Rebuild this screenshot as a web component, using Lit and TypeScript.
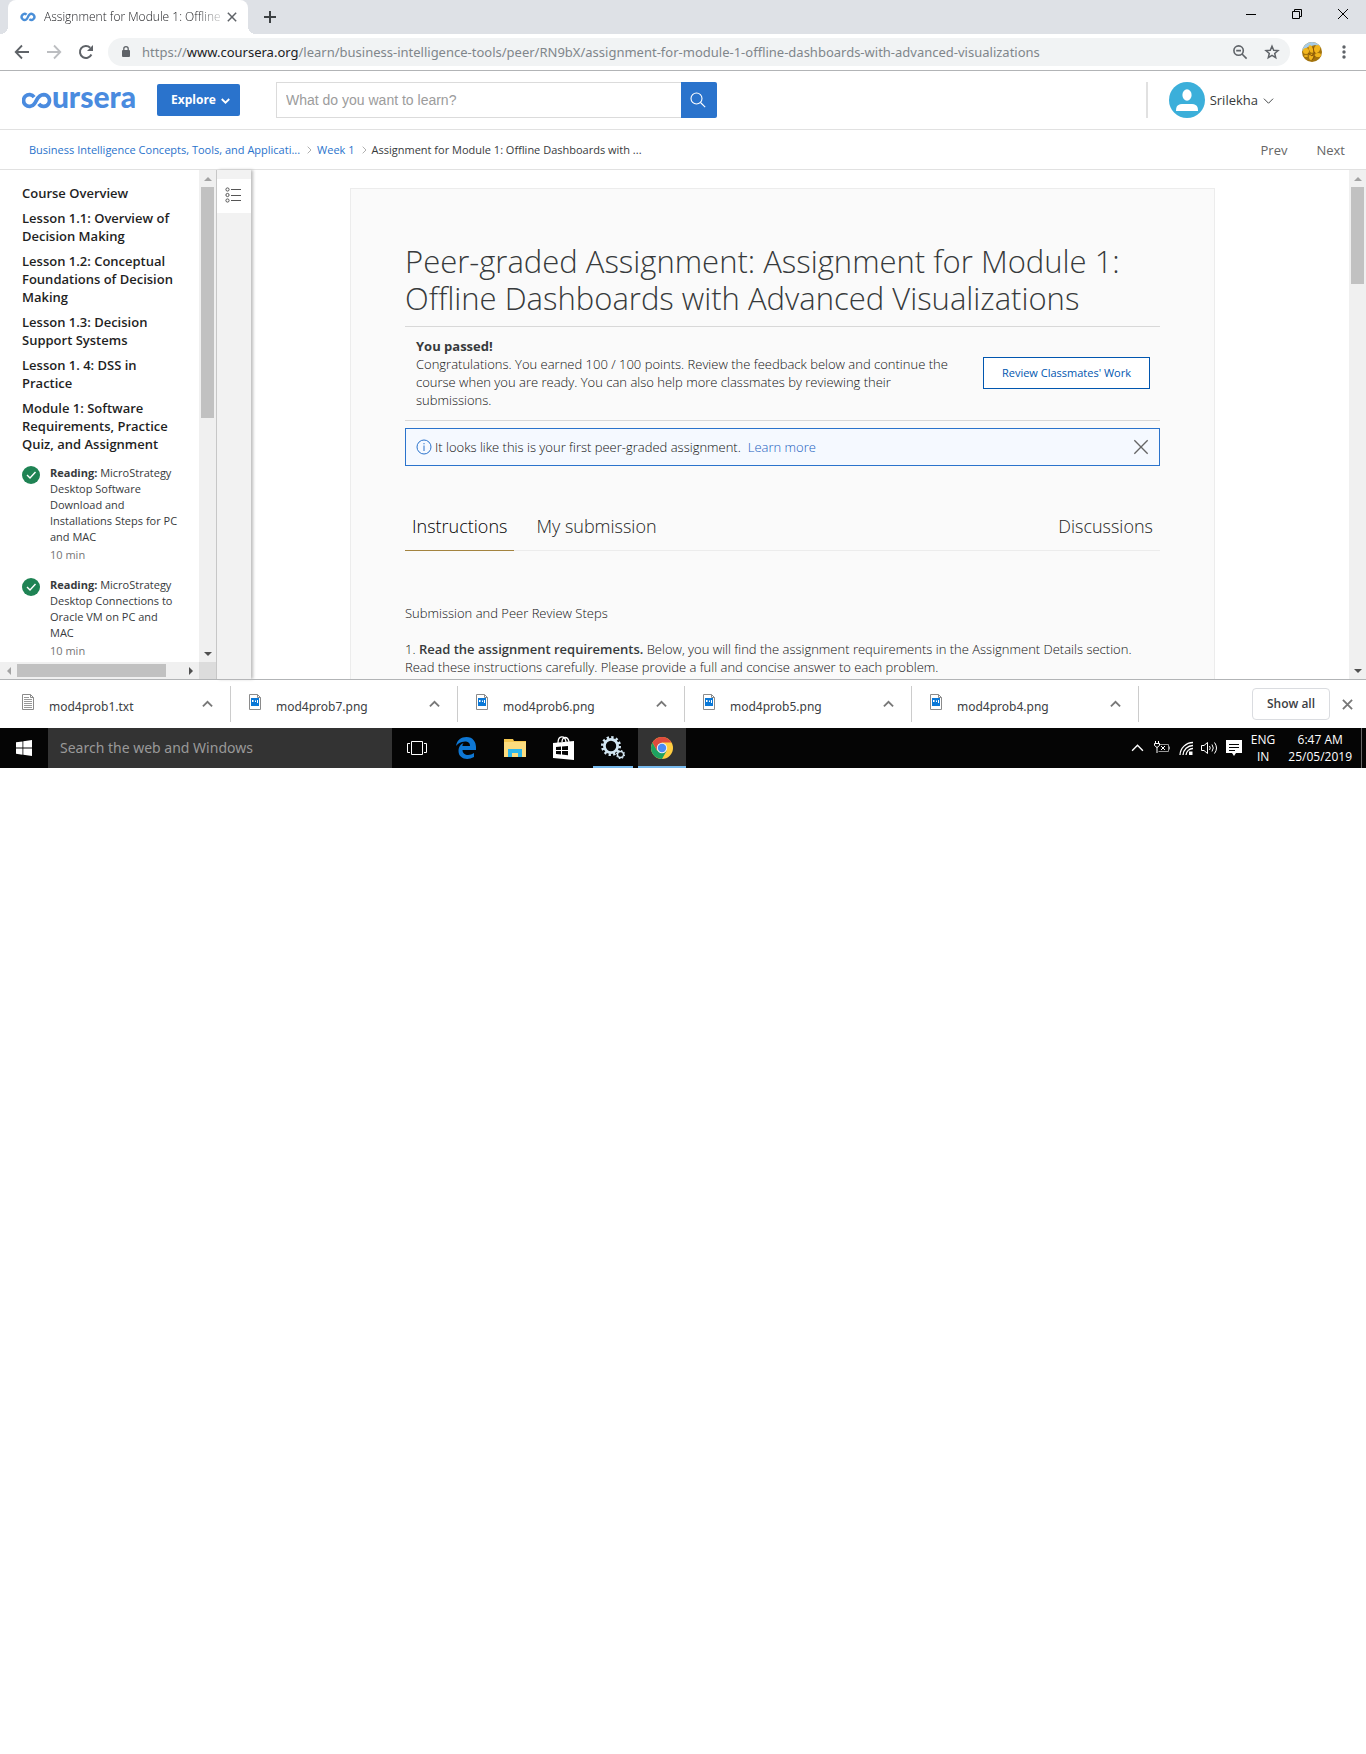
import { LitElement, html, css, svg } from "lit";
import { customElement, property } from "lit/decorators.js";

const chevron = (dir: "up" | "down" | "right", size: number, width = 1) => {
  const d = { up: "M1 8 L6 3 L11 8", down: "M1 4 L6 9 L11 4", right: "M4 1 L9 6 L4 11" }[dir];
  return html`<svg width=${size} height=${size} viewBox="0 0 12 12" fill="none" stroke="currentColor" stroke-width=${width} aria-hidden="true"><path d=${d} /></svg>`;
};

const cross = (size: number, width = 1) =>
  html`<svg width=${size} height=${size} viewBox="0 0 12 12" stroke="currentColor" stroke-width=${width} aria-hidden="true"><path d="M1 1 L11 11 M11 1 L1 11" /></svg>`;

@customElement("scroll-bar")
export class ScrollBar extends LitElement {
  @property({ type: Boolean, reflect: true }) horizontal = false;
  @property({ type: Number }) ratio = 50;

  static styles = css`
    :host { display: flex; flex-direction: column; width: 17px; background: #f0f0f0; }
    :host([horizontal]) { flex-direction: row; width: auto; height: 17px; }
    .arrow { flex: none; display: grid; place-items: center; width: 17px; height: 17px; color: #505050; }
    .start { color: #a3a3a3; }
    .track { flex: 1; min-height: 0; min-width: 0; padding: 0 2px; }
    :host([horizontal]) .track { padding: 2px 0; }
    .thumb { background: #c1c1c1; height: 100%; }
    svg { display: block; }
  `;

  render() {
    const a = this.horizontal ? "M7 1 L3 5 L7 9 Z" : "M1 7 L5 3 L9 7 Z";
    const b = this.horizontal ? "M3 1 L7 5 L3 9 Z" : "M1 3 L5 7 L9 3 Z";
    const size = `${this.horizontal ? "width" : "height"}:${this.ratio}%`;
    return html`
      <div class="arrow start"><svg width="10" height="10"><path d=${a} fill="currentColor" /></svg></div>
      <div class="track"><div class="thumb" style=${size}></div></div>
      <div class="arrow"><svg width="10" height="10"><path d=${b} fill="currentColor" /></svg></div>
    `;
  }
}

@customElement("browser-chrome")
export class BrowserChrome extends LitElement {
  static styles = css`
    :host { display: block; font: 13px/18px "Noto Sans", "Open Sans", sans-serif; color: #5f6368; }
    button { border: 0; padding: 0; background: none; color: inherit; display: grid; place-items: center; }
    svg { display: block; }
    .tabs { display: flex; height: 34px; background: #dee1e6; padding-left: 8px; }
    .tab { position: relative; display: flex; align-items: center; width: 240px; padding: 0 8px 0 12px; box-sizing: border-box;
      background: #fff; border-radius: 8px 8px 0 0; }
    .tab::before, .tab::after { content: ""; position: absolute; bottom: 0; width: 8px; height: 8px; }
    .tab::before { left: -8px; background: radial-gradient(circle at 0 0, #dee1e6 8px, #fff 8px); }
    .tab::after { right: -8px; background: radial-gradient(circle at 100% 0, #dee1e6 8px, #fff 8px); }
    .name { flex: 1; min-width: 0; margin-left: 8px; white-space: nowrap; color: #202124;
      font: 300 12px/18px "Open Sans", sans-serif;
      -webkit-mask-image: linear-gradient(90deg, #000 85%, transparent 102%); }
    .close { width: 16px; height: 16px; }
    .new { width: 44px; color: #3c4043; }
    .win { display: flex; margin-left: auto; color: #000; height: 28px; }
    .win button { width: 46px; }
    .bar { display: flex; align-items: center; height: 36px; padding: 0 4px 0 6px; border-bottom: 1px solid #b2b4b6; }
    .nav { width: 32px; height: 28px; }
    .dim { color: #bcbec1; }
    .url { flex: 1; min-width: 0; display: flex; align-items: center; height: 28px; margin: 0 8px 0 6px; padding: 0 2px 0 10px;
      border-radius: 14px; background: #f1f3f4; }
    .address { flex: 1; min-width: 0; overflow: hidden; white-space: nowrap; margin-left: 8px; color: #80868b; }
    .address b { font-weight: 400; color: #202124; }
    .avatar { width: 28px; }
    .menu { width: 36px; height: 28px; }
  `;

  render() {
    return html`
      <div class="tabs">
        <div class="tab">
          <svg width="16" height="16" viewBox="0 0 16 16" fill="none" stroke="#4a8fd8" stroke-width="2.4"><path d="M6.6 5.6 A3 3 0 1 0 6.6 10.2 C8 8.8 8 6.8 9.4 5.6 A3 3 0 1 1 9.4 10.2" /></svg>
          <span class="name">Assignment for Module 1: Offline</span>
          <button class="close" aria-label="Close tab">${cross(10, 1.8)}</button>
        </div>
        <button class="new" aria-label="New tab"><svg width="14" height="14" viewBox="0 0 14 14" stroke="currentColor" stroke-width="2"><path d="M7 1 V13 M1 7 H13" /></svg></button>
        <div class="win">
          <button aria-label="Minimize"><svg width="10" height="10" stroke="currentColor"><path d="M0 5.5 H10" /></svg></button>
          <button aria-label="Restore"><svg width="10" height="10" fill="none" stroke="currentColor"><path d="M.5 2.5 H7.5 V9.5 H.5 Z M2.5 2.5 V.5 H9.5 V7.5 H7.5" /></svg></button>
          <button aria-label="Close window">${cross(12)}</button>
        </div>
      </div>
      <div class="bar">
        <button class="nav" aria-label="Back"><svg width="16" height="16" viewBox="0 0 16 16" fill="none" stroke="currentColor" stroke-width="1.8"><path d="M15 8 H2 M8 1.5 L1.7 8 L8 14.5" /></svg></button>
        <button class="nav dim" aria-label="Forward"><svg width="16" height="16" viewBox="0 0 16 16" fill="none" stroke="currentColor" stroke-width="1.8"><path d="M1 8 H14 M8 1.5 L14.3 8 L8 14.5" /></svg></button>
        <button class="nav" aria-label="Reload"><svg width="16" height="16" viewBox="0 0 16 16" fill="none" stroke="currentColor" stroke-width="2"><path d="M13.4 10.5 A6 6 0 1 1 12.2 3.7" /><path d="M15 1 V7 H9 Z" fill="currentColor" stroke="none" /></svg></button>
        <div class="url">
          <svg width="16" height="16" viewBox="0 0 16 16"><rect x="4" y="6" width="8" height="7" rx="1" fill="#5f6368" /><path d="M5.8 6.5 V4.8 A2.2 2.2 0 0 1 10.2 4.8 V6.5" fill="none" stroke="#5f6368" stroke-width="1.3" /></svg>
          <span class="address">https://<b>www.coursera.org</b>/learn/business-intelligence-tools/peer/RN9bX/assignment-for-module-1-offline-dashboards-with-advanced-visualizations</span>
          <button class="nav" aria-label="Zoom"><svg width="16" height="16" viewBox="0 0 16 16" fill="none" stroke="currentColor" stroke-width="1.6"><circle cx="6.6" cy="6.6" r="4.7" /><path d="M10 10 L14.6 14.6 M4.2 6.6 H9" /></svg></button>
          <button class="nav" aria-label="Bookmark"><svg width="16" height="16" viewBox="0 0 16 16" fill="none" stroke="currentColor" stroke-width="1.5"><path d="M8 2.2 L9.7 6.2 L14 6.6 L10.7 9.4 L11.7 13.6 L8 11.4 L4.3 13.6 L5.3 9.4 L2 6.6 L6.3 6.2 Z" /></svg></button>
        </div>
        <button class="avatar" aria-label="Profile">
          <svg width="20" height="20" viewBox="0 0 20 20">
            <clipPath id="c"><circle cx="10" cy="10" r="10" /></clipPath>
            <g clip-path="url(#c)">
              <rect width="20" height="20" fill="#a3730c" /><path d="M0 0 H20 V6 L13 3 L6 5 L0 9 Z" fill="#a6cbe6" />
              <g fill="#f2b51b"><ellipse cx="4" cy="9" rx="3" ry="3" /><ellipse cx="9" cy="7" rx="2" ry="4" transform="rotate(-20 9 7)" /><ellipse cx="15" cy="7" rx="3" ry="4" transform="rotate(25 15 7)" /><ellipse cx="16" cy="13" rx="3" ry="2" /><ellipse cx="9" cy="15" rx="2" ry="3" /><ellipse cx="4" cy="14" rx="2" ry="1" /></g>
              <path d="M6 11 L10 14 L13 10 M11 5 L12 10 M10 18 L13 14" stroke="#8a5208" fill="none" />
            </g>
          </svg>
        </button>
        <button class="menu" aria-label="Menu"><svg width="4" height="16" fill="currentColor"><circle cx="2" cy="3" r="1.7" /><circle cx="2" cy="8" r="1.7" /><circle cx="2" cy="13" r="1.7" /></svg></button>
      </div>
    `;
  }
}

@customElement("course-header")
export class CourseHeader extends LitElement {
  static styles = css`
    :host { display: block; font: 13px/18px "Open Sans", sans-serif; color: #373a3c; }
    svg { display: block; }
    a { color: inherit; text-decoration: none; }
    button { border: 0; padding: 0; font: inherit; }
    .top { display: flex; align-items: center; height: 58px; padding: 0 92px 0 22px; border-bottom: 1px solid #e1e1e1; }
    .logo { display: flex; align-items: center; width: 114px; color: #4a8bdf; font: 900 30px/34px Lato, sans-serif; }
    .logo span { margin-top: -8px; }
    .explore { display: flex; align-items: center; justify-content: center; gap: 5px; width: 83px; height: 32px; margin-left: 21px; padding-left: 4px;
      border-radius: 2px; background: #2a73cc; color: #fff; font-size: 12px; font-weight: 700; }
    .search { display: flex; width: 441px; margin-left: 36px; }
    .search input { flex: 1; min-width: 0; height: 36px; box-sizing: border-box; padding: 0 9px; border: 1px solid #dbdbdb; border-right: 0;
      font: 14px/18px "Liberation Sans", Arial, sans-serif; color: #373a3c; outline: 0; }
    .search input::placeholder { color: #9c9c9c; opacity: 1; }
    .go { display: grid; place-items: center; width: 36px; padding-right: 3px; background: #2a73cc; color: #fff; border-radius: 0 2px 2px 0; }
    .user { display: flex; align-items: center; gap: 5px; margin-left: auto; padding-left: 21px; height: 36px;
      border-left: 2px solid #e1e1e1; background: none; color: #373a3c; }
    .crumbs { display: flex; align-items: center; height: 39px; padding: 0 21px 0 29px; border-bottom: 1px solid #e1e1e1; font-size: 11px; }
    .crumbs svg { margin: 0 4px 0 5px; color: #888; }
    .crumbs .link { color: #2a73cc; }
    .steps { display: flex; gap: 29px; margin-left: auto; font-size: 13px; color: #666; }
  `;

  render() {
    return html`
      <div class="top">
        <a class="logo" href="#" aria-label="Coursera home">
          <svg width="32" height="17" viewBox="0 0 32 17" fill="none" stroke="currentColor" stroke-width="4"><path d="M13 4.8 A6.3 6.3 0 1 0 13 12.3 C16 9 16.5 2.2 23.3 2.2 A6.3 6.3 0 1 1 18 12.2" /></svg>
          <span>ursera</span>
        </a>
        <button class="explore">Explore ${chevron("down", 9, 2.4)}</button>
        <form class="search">
          <input type="search" aria-label="Search catalog" placeholder="What do you want to learn?" />
          <button class="go" type="button" aria-label="Search"><svg width="16" height="16" viewBox="0 0 16 16" fill="none" stroke="currentColor" stroke-width="1.1"><circle cx="6.5" cy="6.5" r="5.5" /><path d="M10.5 10.5 L15.2 15.2" /></svg></button>
        </form>
        <button class="user">
          <svg width="36" height="36" viewBox="0 0 36 36"><circle cx="18" cy="18" r="18" fill="#3bafda" /><ellipse cx="18" cy="13" rx="4.6" ry="5.8" fill="#fff" /><path d="M7 29 C7 22 10 22 18 22 C26 22 29 22 29 29 Z" fill="#fff" /></svg>
          Srilekha ${chevron("down", 11)}
        </button>
      </div>
      <nav class="crumbs">
        <a class="link" href="#">Business Intelligence Concepts, Tools, and Applicati...</a>
        ${chevron("right", 8)}<a class="link" href="#">Week 1</a>${chevron("right", 8)}
        <span>Assignment for Module 1: Offline Dashboards with ...</span>
        <span class="steps"><a href="#">Prev</a><a href="#">Next</a></span>
      </nav>
    `;
  }
}

@customElement("course-outline")
export class CourseOutline extends LitElement {
  lessons = [
    "Course Overview",
    "Lesson 1.1: Overview of Decision Making",
    "Lesson 1.2: Conceptual Foundations of Decision Making",
    "Lesson 1.3: Decision Support Systems",
    "Lesson 1. 4: DSS in Practice",
    "Module 1: Software Requirements, Practice Quiz, and Assignment",
  ];
  readings = [
    "MicroStrategy Desktop Software Download and Installations Steps for PC and MAC",
    "MicroStrategy Desktop Connections to Oracle VM on PC and MAC",
  ];

  static styles = css`
    :host { display: grid; grid-template: minmax(0, 1fr) 17px / minmax(0, 1fr) 17px; width: 216px; border-right: 1px solid #c8c8c8;
      font: 13px/18px "Open Sans", sans-serif; color: #1f1f1f; }
    .list { overflow: hidden; padding: 14px 20px 0 22px; }
    h3 { margin: 0 0 7px; font: inherit; font-weight: 600; }
    a { display: flex; gap: 10px; margin: 12px 0; color: #373a3c; text-decoration: none; font-size: 11px; line-height: 16px; }
    svg { flex: none; display: block; margin-top: 1px; }
    b { font-weight: 700; }
    .time { display: block; line-height: 20px; color: #757575; }
    .corner { background: #dcdcdc; }
  `;

  render() {
    return html`
      <div class="list">
        ${this.lessons.map((l) => html`<h3>${l}</h3>`)}
        ${this.readings.map((r) => html`
          <a href="#">
            <svg width="18" height="18" viewBox="0 0 18 18"><circle cx="9" cy="9" r="9" fill="#1f8354" /><path d="M5 9 L8 12 L13.5 6" fill="none" stroke="#fff" stroke-width="1.4" /></svg>
            <span><b>Reading:</b> ${r}<span class="time">10 min</span></span>
          </a>`)}
      </div>
      <scroll-bar .ratio=${50.5}></scroll-bar>
      <scroll-bar horizontal .ratio=${90}></scroll-bar>
      <div class="corner"></div>
    `;
  }
}

@customElement("assignment-page")
export class AssignmentPage extends LitElement {
  static styles = css`
    :host { display: block; overflow: hidden; padding-right: 35px; font: 300 13px/18px "Open Sans", sans-serif; color: #111; }
    svg { display: block; }
    a { color: #1a60c0; text-decoration: none; }
    .card { max-width: 755px; margin: 18px auto 0; padding: 54px 54px 40px; border: 1px solid #ececec; background: #fafafa; }
    h1 { margin: 0; font-size: 31px; font-weight: 300; line-height: 37px; padding-bottom: 9px; color: #373a3c; }
    .status { display: flex; align-items: center; justify-content: space-between; padding: 10px 10px 11px 11px; border: solid #d8d8d8; border-width: 1px 0; }
    .status p { margin: 0; max-width: 545px; }
    b { font-weight: 600; color: #373a3c; }
    .status b { display: block; font-weight: 700; }
    .review { height: 32px; padding: 0 18px; border: 1px solid #0156af; background: #fff; color: #0156af; font: 400 11px/18px "Open Sans", sans-serif; }
    .note { display: flex; align-items: center; gap: 3px; margin-top: 7px; padding: 9px 10px; border: 1px solid #2a73cc; background: #f5f9ff; }
    .note a { margin-left: 4px; }
    .note button { margin-left: auto; border: 0; padding: 0; background: none; color: #666; }
    .tabs { display: flex; margin-top: 42px; border-bottom: 1px solid #ececec; }
    .tabs a { padding: 5px 7px 10px; margin: 0 15px -1px 0; border-bottom: 1px solid transparent; font-size: 18px; line-height: 26px; color: #222; }
    .tabs .on { color: #000; border-color: #a3833f; }
    .tabs a:last-child { margin: 0 0 0 auto; }
    .steps { margin: 53px 0 0; }
    .steps p { margin: 0 0 18px; }
  `;

  render() {
    return html`
      <article class="card">
        <h1>Peer-graded Assignment: Assignment for Module 1: Offline Dashboards with Advanced Visualizations</h1>
        <div class="status">
          <p><b>You passed!</b>Congratulations. You earned 100 / 100 points. Review the feedback below and continue the course when you are ready. You can also help more classmates by reviewing their submissions.</p>
          <button class="review">Review Classmates' Work</button>
        </div>
        <div class="note">
          <svg width="16" height="16" viewBox="0 0 16 16" fill="none" stroke="#2a73cc"><circle cx="8" cy="8" r="7" /><path d="M8 6.5 V12 M8 4 V5.3" /></svg>
          <span>It looks like this is your first peer-graded assignment.</span> <a href="#">Learn more</a>
          <button aria-label="Dismiss">${cross(16)}</button>
        </div>
        <nav class="tabs"><a class="on" href="#">Instructions</a><a href="#">My submission</a><a href="#">Discussions</a></nav>
        <section class="steps">
          <p>Submission and Peer Review Steps</p>
          <p>1. <b>Read the assignment requirements.</b> Below, you will find the assignment requirements in the Assignment Details section. Read these instructions carefully. Please provide a full and concise answer to each problem.</p>
        </section>
      </article>
    `;
  }
}

@customElement("download-shelf")
export class DownloadShelf extends LitElement {
  files = ["mod4prob1.txt", "mod4prob7.png", "mod4prob6.png", "mod4prob5.png", "mod4prob4.png"];

  static styles = css`
    :host { display: flex; align-items: center; height: 48px; padding: 0 12px 0 4px; border-top: 1px solid #b2b4b6; background: #fff;
      font: 12px/18px "Noto Sans", "Open Sans", sans-serif; color: #3c4043; }
    button { border: 0; padding: 0; background: none; font: inherit; color: #777; display: grid; place-items: center; }
    svg { display: block; }
    .file { display: flex; align-items: center; width: 227px; height: 36px; padding: 0 17px 0 18px; box-sizing: border-box; border-right: 1px solid #ccc; }
    .icon { align-self: flex-start; margin-top: 8px; }
    .name { flex: 1; margin: 6px 0 0 15px; }
    .all { width: 78px; height: 32px; margin: 0 10px 0 auto; border: 1px solid #dadce0; border-radius: 4px; color: #3c4043; font: 600 12px/18px "Open Sans", sans-serif; }
    .shut { width: 14px; }
  `;

  private icon(name: string) {
    return html`<svg class="icon" width="12" height="16" viewBox="0 0 12 16"><path d="M.5 .5 H8.5 L11.5 3.5 V15.5 H.5 Z" fill="#fff" stroke="#8b8b8b" /><path d="M8.5 .5 V3.5 H11.5" fill="none" stroke="#8b8b8b" />
      ${name.endsWith(".txt")
        ? svg`<path d="M2 3.5 H7 M2 5.5 H10 M2 7.5 H10 M2 9.5 H10 M2 11.5 H10 M2 13.5 H10" stroke="#999" />`
        : svg`<rect x="2" y="4" width="8" height="8" fill="#0a78d7" /><path d="M3 6 H4.5 V8 H3 Z M6 6.5 H7 V8 H6 Z M8 6 H9 V9 H8 Z" fill="#fff" />`}</svg>`;
  }

  render() {
    return html`
      ${this.files.map((f) => html`<div class="file">${this.icon(f)}<span class="name">${f}</span><button aria-label="Options for ${f}">${chevron("up", 11, 2)}</button></div>`)}
      <button class="all">Show all</button>
      <button class="shut" aria-label="Close downloads bar">${cross(11, 2)}</button>
    `;
  }
}

@customElement("task-bar")
export class TaskBar extends LitElement {
  static styles = css`
    :host { display: flex; height: 40px; background: #050505; color: #fff; font: 12px/17px "Open Sans", sans-serif; }
    button { border: 0; padding: 0; background: none; color: inherit; display: grid; place-items: center; }
    svg { display: block; }
    .start { width: 48px; }
    .find { width: 344px; box-sizing: border-box; padding: 0 12px; border: 0; border-radius: 0; background: #333; color: #fff; outline: 0;
      font: 14px/20px "Noto Sans", "Open Sans", sans-serif; }
    .find::placeholder { color: #999; opacity: 1; }
    .app { width: 49px; box-sizing: border-box; border-bottom: 2px solid transparent; padding-top: 2px; }
    .run { width: 40px; margin: 0 5px; border-color: #76b9ed; }
    .active { width: 48px; background: #333; border-color: #76b9ed; }
    .tray { display: flex; align-items: center; margin-left: auto; gap: 6px; }
    .tray button { width: 18px; height: 24px; }
    .lang { margin: 0 7px 0 2px; text-align: center; }
    .clock { text-align: center; }
    .peek { width: 4px; height: 40px; margin-left: 3px; border-left: 1px solid #666; }
  `;

  private gear(cx: number, cy: number, r: number, teeth: number) {
    return svg`<g fill="none" stroke="#d3e6f2"><circle cx=${cx} cy=${cy} r=${r} stroke-width=${r * 0.42} />
      <circle cx=${cx} cy=${cy} r=${r * 1.32} stroke-width=${r * 0.4} stroke-dasharray="${(Math.PI * 1.32 * r) / teeth} ${(Math.PI * 1.32 * r) / teeth}" /></g>`;
  }

  render() {
    return html`
      <button class="start" aria-label="Start"><svg width="16" height="16" viewBox="0 0 16 16" fill="#fff"><path d="M0 2.3 L6.5 1.4 V7.6 H0 Z M7.3 1.3 L16 0 V7.6 H7.3 Z M0 8.4 H6.5 V14.7 L0 13.8 Z M7.3 8.4 H16 V16 L7.3 14.8 Z" /></svg></button>
      <input class="find" type="search" aria-label="Search the web and Windows" placeholder="Search the web and Windows" />
      <button class="app" aria-label="Task view"><svg width="20" height="14" fill="none" stroke="#fff"><path d="M4.5 .5 H15.5 V13.5 H4.5 Z M3 2.5 H.5 V11.5 H3 M17 2.5 H19.5 V11.5 H17" /></svg></button>
      <button class="app" aria-label="Edge"><svg width="20" height="22" viewBox="0 0 20 22"><path d="M0 9 C1 3 5 0 10.5 0 C17 0 20 5 20 10 V13 H6.5 C6.7 19 14 19 18 16 V20 C11 24 2.5 21.5 2.5 14 C2.5 9.5 5 7 7.5 6 C6.7 7 6.5 8 6.4 9 H14 C14 4 9 4 6 5 C3 6 1 7.5 0 9 Z" fill="#0e77d4" /></svg></button>
      <button class="app" aria-label="File Explorer"><svg width="22" height="18" viewBox="0 0 22 18"><path d="M0 0 H9 L10 2 H22 V18 H0 Z" fill="#f3c64f" /><path d="M0 3 H22 V18 H0 Z" fill="#fbdc7e" /><path d="M4 18 V10 H18 V18 H14 V14 H8 V18 Z" fill="#2db7ea" /></svg></button>
      <button class="app" aria-label="Store"><svg width="22" height="24" viewBox="0 0 22 24"><path d="M0 7 L21 5 V24 L0 22 Z" fill="#fff" /><path d="M5 7 C5 -1 12 -1 13 6 M9 6 C9 0 15 0 16 6" fill="none" stroke="#fff" stroke-width="1.3" /><path d="M3 11 L8 10.6 V14 H3 Z M9 10.5 L15 10 V14 H9 Z M3 15 H8 V18.5 L3 18 Z M9 15 H15 V19.3 L9 18.6 Z" fill="#050505" /></svg></button>
      <button class="app run" aria-label="Services"><svg width="24" height="24" viewBox="0 0 24 24">${this.gear(10, 10, 6.6, 12)}${this.gear(19.5, 18.5, 3, 8)}</svg></button>
      <button class="app active" aria-label="Chrome"><svg width="22" height="22" viewBox="0 0 22 22"><circle cx="11" cy="11" r="11" fill="#ffcd41" /><path d="M1.5 5.5 A11 11 0 0 0 11 22 L15.7 13.8 L11 11 L6.2 13.7 Z" fill="#1da261" /><path d="M1.5 5.5 A11 11 0 0 1 20.5 5.5 H11 L6.2 13.7 Z" fill="#de4b3d" /><circle cx="11" cy="11" r="5.2" fill="#f1f1f1" /><circle cx="11" cy="11" r="4.2" fill="#4a8af4" /></svg></button>
      <div class="tray">
        <button aria-label="Show hidden icons">${chevron("up", 13, 1.3)}</button>
        <button aria-label="Battery"><svg width="16" height="14" viewBox="0 0 16 14" fill="none" stroke="#fff"><path d="M6 3.5 H14.5 V10.5 H4.5 M15.5 5.5 V8.5" stroke="#999" /><path d="M1.5 0 V2 M4.5 0 V2 M.5 2.5 H5.5 V4.5 L3 6.5 L.5 4.5 Z M3 6 V12 M7 5 L11 9 M11 5 L7 9" /></svg></button>
        <button aria-label="Network"><svg width="14" height="14" viewBox="0 0 14 14" fill="none" stroke="#fff" stroke-width="1.3"><path d="M1 14 A13 13 0 0 1 14 1.5 M4 14 A10 10 0 0 1 14 4.5 M7 14 A7 7 0 0 1 14 7.5" /><rect x="10" y="10.5" width="3.5" height="3.5" fill="#fff" stroke="none" /></svg></button>
        <button aria-label="Volume"><svg width="17" height="14" viewBox="0 0 17 14" fill="none" stroke="#fff"><path d="M.5 4.5 H3 L6.5 1.5 V12.5 L3 9.5 H.5 Z M8.5 5 Q10 7 8.5 9 M11 3.5 Q13.5 7 11 10.5 M13.5 1.5 Q17.5 7 13.5 12.5" /></svg></button>
        <button aria-label="Notifications"><svg width="16" height="17" viewBox="0 0 16 17"><path d="M0 0 H16 V13 H10 L8 16 L6 13 H0 Z" fill="#fff" /><path d="M3 4.5 H13 M3 7.5 H13 M3 10.5 H9" stroke="#050505" /></svg></button>
        <div class="lang">ENG<br />IN</div>
        <div class="clock">6:47 AM<br />25/05/2019</div>
        <div class="peek"></div>
      </div>
    `;
  }
}

@customElement("app-root")
export class AppRoot extends LitElement {
  static styles = css`
    :host { display: block; background: #fff; }
    .desktop { display: flex; flex-direction: column; aspect-ratio: 1366 / 768; }
    .workspace { flex: 1; min-height: 0; display: flex; }
    .rail { width: 34px; flex: none; background: #f2f2f2; box-shadow: 2px 0 3px #bbb; padding-top: 9px; box-sizing: border-box; z-index: 1; }
    .toggle { display: grid; place-items: center; width: 34px; height: 34px; border: 0; padding: 0 3px 3px 0; background: #fff; }
    assignment-page { flex: 1; min-width: 0; }
  `;

  render() {
    return html`
      <div class="desktop">
        <browser-chrome></browser-chrome>
        <course-header></course-header>
        <main class="workspace">
          <course-outline></course-outline>
          <div class="rail">
            <button class="toggle" aria-label="Toggle outline"><svg width="16" height="16" viewBox="0 0 16 16" fill="none" stroke="#555"><circle cx="2.5" cy="2.5" r="1.6" /><circle cx="2.5" cy="8" r="1.6" /><circle cx="2.5" cy="13.5" r="1.6" /><path d="M6 2.5 H16 M6 8.5 H16 M6 13.5 H16" /></svg></button>
          </div>
          <assignment-page></assignment-page>
          <scroll-bar .ratio=${20.5}></scroll-bar>
        </main>
        <download-shelf></download-shelf>
        <task-bar></task-bar>
      </div>
    `;
  }
}
